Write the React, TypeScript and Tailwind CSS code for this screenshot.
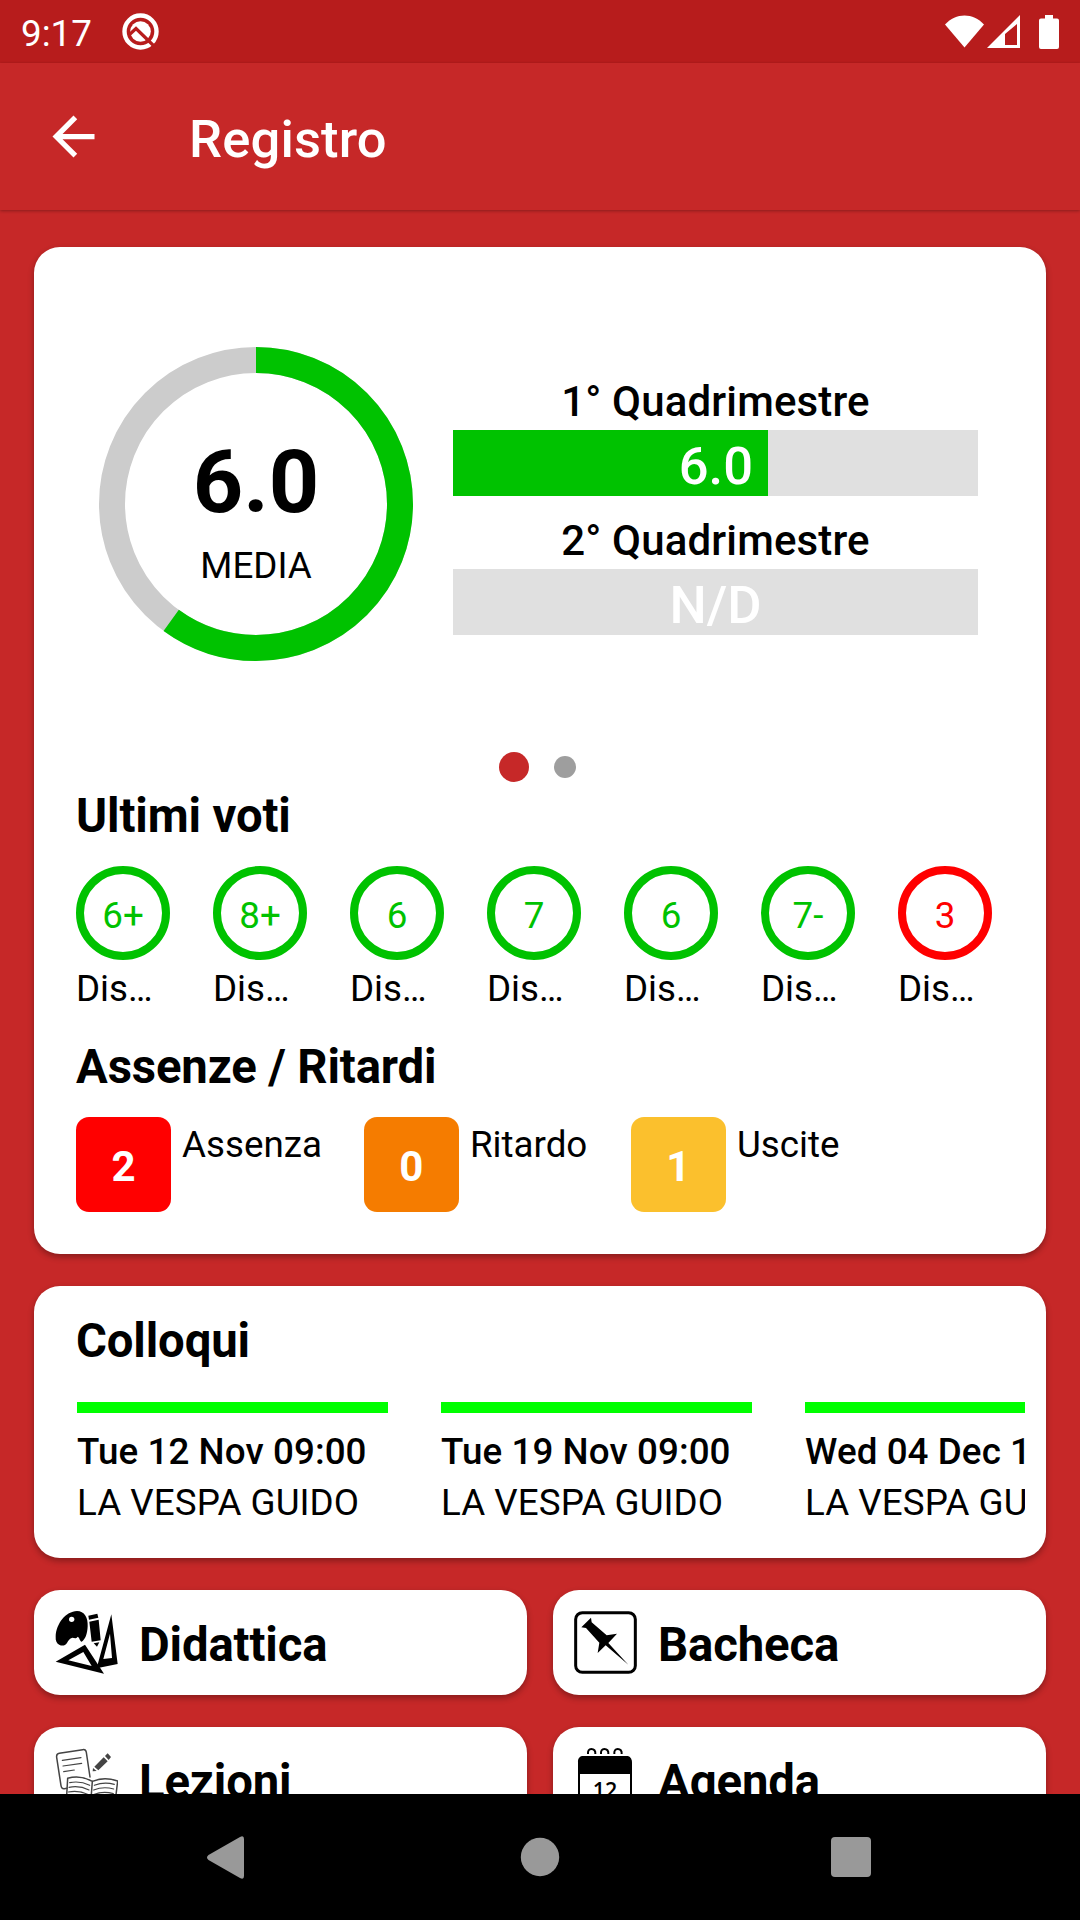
const GREEN = "#00c200";
const RED = "#ff0000";

const quadrimestri = [
  { title: "1° Quadrimestre", value: "6.0", percent: 60 },
  { title: "2° Quadrimestre", value: "N/D", percent: 0 },
];

const voti = [
  { voto: "6+", color: GREEN },
  { voto: "8+", color: GREEN },
  { voto: "6", color: GREEN },
  { voto: "7", color: GREEN },
  { voto: "6", color: GREEN },
  { voto: "7-", color: GREEN },
  { voto: "3", color: RED },
];

const assenze = [
  { count: 2, label: "Assenza", className: "bg-[#ff0000]" },
  { count: 0, label: "Ritardo", className: "bg-[#f57c00]" },
  { count: 1, label: "Uscite", className: "bg-[#fbc02d]" },
];

const colloqui = [
  { date: "Tue 12 Nov 09:00", teacher: "LA VESPA GUIDO" },
  { date: "Tue 19 Nov 09:00", teacher: "LA VESPA GUIDO" },
  { date: "Wed 04 Dec 10:00", teacher: "LA VESPA GUIDO" },
];

const card = "bg-white rounded-[26px] shadow-[0_3px_6px_rgba(0,0,0,0.32)]";
const heading = "text-[47.25px] font-bold leading-[56px] tracking-[-0.12px]";

function DidatticaIcon() {
  return (
    <svg className="size-[63px] shrink-0" viewBox="0 0 189 189">
      <path d="M2 76C4 38 32 1 66 0c22 0 34 20 32 46-1 22-7 40-18 46-6-2-6-12-12-15-6 8-10 3-16 3-8 2-12 8-16 16-4 7-14 10-22 6C5 98 1 90 2 76z" />
      <circle cx="50" cy="25" r="8" fill="#fff" />
      <path d="M100 14l27-6 3 12-28 6zM103 32l28-6 6 62-27 4zM116 97l17-3-7 13z" />
      <path fillRule="evenodd" d="M169 10l19 149-63 13zM165 68l-20 76 26-3z" />
      <path fillRule="evenodd" d="M2 152l88-51 57 87zM40 148l70 17-25-42z" />
    </svg>
  );
}

function BachecaIcon() {
  return (
    <svg className="size-[63px] shrink-0" viewBox="0 0 189 189">
      <rect x="5" y="5" width="179" height="179" rx="20" fill="none" stroke="#000" strokeWidth="9" />
      <path d="M51 20l2 14 45 39 31-5-26 28 60 65-68-58-24 23 5-31-40-44-14-2z" />
    </svg>
  );
}

function LezioniIcon() {
  return (
    <svg className="size-[63px] shrink-0" viewBox="0 0 189 189" fill="none" stroke="#444" strokeWidth="4.500" strokeLinecap="round">
      <path d="M36 121l-8 1c-6 1-9-3-10-9L5 28c-1-7 2-11 8-12l70-11c6-1 10 2 11 8l11 74" />
      <path d="M22 37l56-8M24 54l56-8M26 71l32-5" strokeWidth="3.500" />
      <path d="M118 56l28-28 12 12-28 27zM150 24l8-8 10 11-7 9zM114 60l11 9-12 1z" fill="#444" stroke="none" />
      <path d="M38 91c24-7 50-4 74 9 24-10 50-10 76-1l-8 66c-22-6-46-6-70 4-22-12-48-14-76-8zM112 100l-5 66" />
      <path d="M44 104c20-4 42-1 60 8M42 118c20-4 42-1 60 8M40 132c20-4 42-1 60 8M118 112c20-8 42-8 60-3M116 126c20-8 42-8 60-3M115 140c20-8 42-8 60-3" strokeWidth="3.500" />
    </svg>
  );
}

function AgendaIcon() {
  return (
    <svg className="size-[63px] shrink-0" viewBox="0 0 189 189">
      <g fill="none" stroke="#000" strokeWidth="6">
        <path d="M42 18c-1-10 3-15 10-15 8 0 13 5 12 15M81 18c-1-10 3-15 10-15 8 0 13 5 12 15M121 18c-1-10 3-15 10-15 8 0 13 5 12 15" />
        <rect x="15" y="30" width="156" height="150" rx="14" />
      </g>
      <path d="M12 78V40c0-10 6-16 16-16h129c10 0 16 6 16 16v38z" />
      <text x="93" y="151" textAnchor="middle" fontFamily="Open Sans, sans-serif" fontWeight="600" fontSize="64">
        12
      </text>
    </svg>
  );
}

const menu = [
  { label: "Didattica", Icon: DidatticaIcon },
  { label: "Bacheca", Icon: BachecaIcon },
  { label: "Lezioni", Icon: LezioniIcon },
  { label: "Agenda", Icon: AgendaIcon },
];

function StatusBar() {
  return (
    <div className="flex h-[63px] shrink-0 items-center bg-[#b71c1c] pl-[21px] pr-[21px] text-white">
      <span className="pt-1 text-[36.75px] leading-[59px]">9:17</span>
      <svg className="ml-[30px] size-[37px]" viewBox="0 0 37 37">
        <circle cx="18.5" cy="18.5" r="16" fill="none" stroke="#fff" strokeWidth="4.4" />
        <circle cx="18.5" cy="18.5" r="10.3" fill="#fff" />
        <path d="M7 22l7-6.500L33 34" fill="none" stroke="#b71c1c" strokeWidth="3.200" />
      </svg>
      <svg className="ml-auto h-[34px] w-[114px]" viewBox="0 0 114 34" fill="#fff">
        <path d="M0 9.500C11-2.500 28-2.500 39 9.500L19.500 32.500z" />
        <path fillRule="evenodd" d="M42 33L75 0v33zM60 19v11h12V9z" />
        <path d="M100 0h8v3.500h4a2 2 0 0 1 2 2V32a2 2 0 0 1-2 2H96a2 2 0 0 1-2-2V5.500a2 2 0 0 1 2-2h4z" />
      </svg>
    </div>
  );
}

function Header() {
  return (
    <header className="z-10 flex h-[147px] shrink-0 items-center bg-[#c62828] pl-[42px] text-white shadow-[0_1px_3px_rgba(0,0,0,0.3)]">
      <svg className="size-[63px]" viewBox="0 0 24 24" fill="#fff">
        <path d="M20 11H7.830l5.590-5.590L12 4l-8 8 8 8 1.410-1.410L7.830 13H20v-2z" />
      </svg>
      <h1 className="ml-[84px] pt-1 text-[52.5px] font-medium leading-[62px] tracking-[0.15px]">Registro</h1>
    </header>
  );
}

function Media() {
  const length = 2 * Math.PI * 144;
  return (
    <div className="grid size-[314px] shrink-0">
      <svg className="col-start-1 row-start-1 -rotate-90" viewBox="0 0 314 314" fill="none" strokeWidth="26">
        <circle cx="157" cy="157" r="144" stroke="#cccccc" />
        <circle cx="157" cy="157" r="144" stroke={GREEN} strokeDasharray={`${length * 0.6} ${length}`} />
      </svg>
      <div className="z-10 col-start-1 row-start-1 pt-[91px] text-center">
        <p className="text-[88px] font-bold leading-[88px]">6.0</p>
        <p className="mt-[18px] text-[36.75px] leading-[44px]">MEDIA</p>
      </div>
    </div>
  );
}

export default function App() {
  return (
    <div className="flex h-[1920px] w-[1080px] flex-col overflow-hidden bg-[#c62828] font-[Roboto,sans-serif] text-black">
      <StatusBar />
      <Header />

      <main className="flex min-h-0 flex-1 flex-col gap-8 overflow-hidden px-[34px] pt-[37px]">
        <section className={`${card} shrink-0 px-[42px] pb-[42px] pt-[100px]`}>
          <div className="flex pl-[23px]">
            <Media />
            <div className="ml-10 w-[525px] pt-[30px]">
              {quadrimestri.map((q) => (
                <div className="mb-5" key={q.title}>
                  <p className="mb-[3px] text-center text-[42px] font-medium leading-[50px] tracking-[0.15px]">{q.title}</p>
                  <div className="h-[66px] bg-[#e0e0e0] text-[52.5px] font-medium leading-[66px] text-white">
                    {q.percent > 0 ? (
                      <div className="h-full bg-[#00c200] pr-[15px] pt-[3px] text-right" style={{ width: `${q.percent}%` }}>
                        {q.value}
                      </div>
                    ) : (
                      <div className="pt-[3px] text-center">{q.value}</div>
                    )}
                  </div>
                </div>
              ))}
            </div>
          </div>

          <div className="mt-[91px] flex h-[30px] items-center gap-[25px] pl-[423px]">
            <span className="size-[30px] rounded-full bg-[#c62828]" />
            <span className="size-[22px] rounded-full bg-[#9e9e9e]" />
          </div>

          <h2 className={`${heading} mt-1.5`}>Ultimi voti</h2>
          <div className="mt-[22px] flex gap-[43px]">
            {voti.map((v, i) => (
              <div className="w-[94px]" key={i}>
                <div
                  className="flex size-[94px] items-center justify-center rounded-full border-8 pt-1.5 text-[36.75px]"
                  style={{ borderColor: v.color, color: v.color }}
                >
                  {v.voto}
                </div>
                <p className="mt-[7px] text-[36.75px] leading-[44px]">Dis…</p>
              </div>
            ))}
          </div>

          <h2 className={`${heading} mt-7`}>Assenze / Ritardi</h2>
          <div className="mt-[22px] flex gap-[42px]">
            {assenze.map((a) => (
              <div className="flex gap-[11px]" key={a.label}>
                <div className={`${a.className} flex size-[95px] items-center justify-center rounded-[13px] pt-1 text-[42px] font-bold text-white`}>
                  {a.count}
                </div>
                <p className="mt-1.5 min-w-[119px] text-[36.75px] leading-[44px]">{a.label}</p>
              </div>
            ))}
          </div>
        </section>

        <section className={`${card} shrink-0 pb-[33px] pl-[42px] pr-[21px] pt-[27px]`}>
          <h2 className={heading}>Colloqui</h2>
          <div className="ml-px mt-[33px] flex gap-[53px] overflow-hidden">
            {colloqui.map((c) => (
              <div className="w-[311px] shrink-0 whitespace-nowrap text-[36.75px] leading-[44px]" key={c.date}>
                <div className="h-[11px] bg-[#00ff00]" />
                <p className="mt-[17px] font-medium tracking-[0.08px]">{c.date}</p>
                <p className="mt-[7px] tracking-[0.05px]">{c.teacher}</p>
              </div>
            ))}
          </div>
        </section>

        <section className="grid shrink-0 grid-cols-2 gap-x-[26px] gap-y-8">
          {menu.map(({ label, Icon }) => (
            <div className={`${card} flex h-[105px] items-center gap-[21px] px-[21px]`} key={label}>
              <Icon />
              <h2 className={`${heading} pt-[5px]`}>{label}</h2>
            </div>
          ))}
        </section>
      </main>

      <nav className="z-10 h-[126px] shrink-0 bg-black">
        <svg className="h-full w-full" viewBox="0 0 1080 126" fill="#999">
          <path d="M208.500 61L240 43q4-2 4 2v37q0 4-4 2L208.500 66q-3-2.500 0-5z" />
          <circle cx="540" cy="63" r="19.200" />
          <rect x="831" y="43" width="40" height="40" rx="4" />
        </svg>
      </nav>
    </div>
  );
}
